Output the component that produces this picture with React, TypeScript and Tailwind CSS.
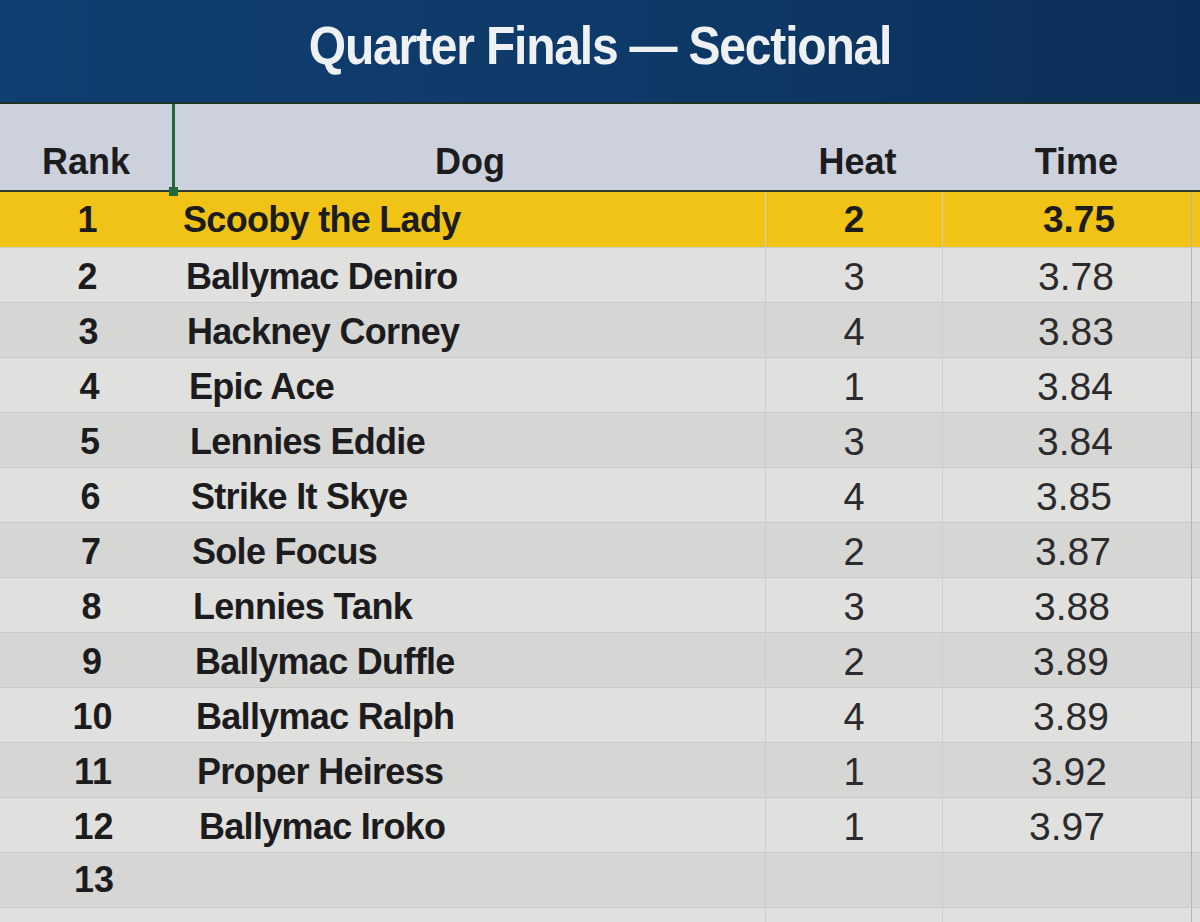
const rows = [
  { rank: '1', dog: 'Scooby the Lady', heat: '2', time: '3.75' },
  { rank: '2', dog: 'Ballymac Deniro', heat: '3', time: '3.78' },
  { rank: '3', dog: 'Hackney Corney', heat: '4', time: '3.83' },
  { rank: '4', dog: 'Epic Ace', heat: '1', time: '3.84' },
  { rank: '5', dog: 'Lennies Eddie', heat: '3', time: '3.84' },
  { rank: '6', dog: 'Strike It Skye', heat: '4', time: '3.85' },
  { rank: '7', dog: 'Sole Focus', heat: '2', time: '3.87' },
  { rank: '8', dog: 'Lennies Tank', heat: '3', time: '3.88' },
  { rank: '9', dog: 'Ballymac Duffle', heat: '2', time: '3.89' },
  { rank: '10', dog: 'Ballymac Ralph', heat: '4', time: '3.89' },
  { rank: '11', dog: 'Proper Heiress', heat: '1', time: '3.92' },
  { rank: '12', dog: 'Ballymac Iroko', heat: '1', time: '3.97' },
  { rank: '13', dog: '', heat: '', time: '' },
  { rank: '', dog: '', heat: '', time: '' },
];

// slight drift across the sheet further down, as in the photo
const namePad = ['pl-[8px]', 'pl-[11px]', 'pl-[12px]', 'pl-[14px]', 'pl-[15px]', 'pl-[16px]', 'pl-[17px]', 'pl-[18px]', 'pl-[20px]', 'pl-[21px]', 'pl-[22px]', 'pl-[24px]', 'pl-[24px]', 'pl-[24px]'];
const rankPad = ['pl-0', 'pl-0', 'pl-[2px]', 'pl-[4px]', 'pl-[5px]', 'pl-[6px]', 'pl-[7px]', 'pl-[8px]', 'pl-[9px]', 'pl-[10px]', 'pl-[11px]', 'pl-[12px]', 'pl-[13px]', 'pl-[13px]'];
const timePad = ['pr-[76px]', 'pr-[77px]', 'pr-[77px]', 'pr-[78px]', 'pr-[78px]', 'pr-[79px]', 'pr-[80px]', 'pr-[81px]', 'pr-[82px]', 'pr-[82px]', 'pr-[84px]', 'pr-[86px]', 'pr-[86px]', 'pr-[86px]'];

const cols = 'grid grid-cols-[175px_590px_177px_249px_1fr]';

export default function App() {
  return (
    <div className="w-[1200px] h-[922px] overflow-hidden bg-[#d9d9d7] font-['Liberation_Sans',Arial,sans-serif] text-[#1c1c1e]">
      {/* title bar */}
      <div className="h-[102px] bg-gradient-to-r from-[#0f3e70] via-[#0e3a69] to-[#0b2f58] flex items-start justify-center pt-[16px]">
        <h1 className="text-[48px] leading-[60px] font-bold tracking-[-1.2px] text-[#eef1f4] scale-y-110">
          Quarter Finals — Sectional
        </h1>
      </div>

      {/* header row */}
      <div className={`${cols} h-[90px] bg-[#cdd1dc] border-t-2 border-[#1d3326] border-b-2 border-b-[#2a3a2c] text-[36px] font-bold`}>
        <div className="relative border-r-[3px] border-[#1f6b3a] flex items-end justify-center pb-[1px]">
          Rank
          <span className="absolute -right-[6px] -bottom-[6px] w-[9px] h-[9px] bg-[#1f6b3a]" />
        </div>
        <div className="flex items-end justify-center pb-[1px]">Dog</div>
        <div className="flex items-end justify-center pb-[1px] pl-[8px]">Heat</div>
        <div className="flex items-end justify-end pb-[1px] pr-[73px]">Time</div>
        <div />
      </div>

      {/* body rows */}
      {rows.map((r, i) => {
        const first = i === 0;
        const bg = first ? 'bg-[#f1c317]' : i % 2 === 0 ? 'bg-[#d6d6d4]' : 'bg-[#e0e0de]';
        return (
          <div
            key={i}
            className={`${cols} ${first ? 'h-[56px]' : 'h-[55px]'} ${bg} border-b border-[#cacac8]`}
          >
            <div className={`flex items-center justify-center text-[36px] font-bold ${rankPad[i]}`}>{r.rank}</div>
            <div className={`flex items-center text-[36px] font-bold tracking-[-0.7px] ${namePad[i]}`}>
              {r.dog}
            </div>
            <div
              className={`flex items-center justify-center border-l border-[#cdcdcb] ${
                first ? 'text-[37px] font-bold' : 'text-[38px] font-normal text-[#2b2b2d]'
              }`}
            >
              {r.heat}
            </div>
            <div
              className={`flex items-center justify-end border-l border-[#cdcdcb] ${timePad[i]} ${
                first ? 'text-[37px] font-bold' : 'text-[39px] font-normal text-[#2b2b2d]'
              }`}
            >
              {r.time}
            </div>
            <div className="border-l border-[#b5b5b3]" />
          </div>
        );
      })}
    </div>
  );
}
